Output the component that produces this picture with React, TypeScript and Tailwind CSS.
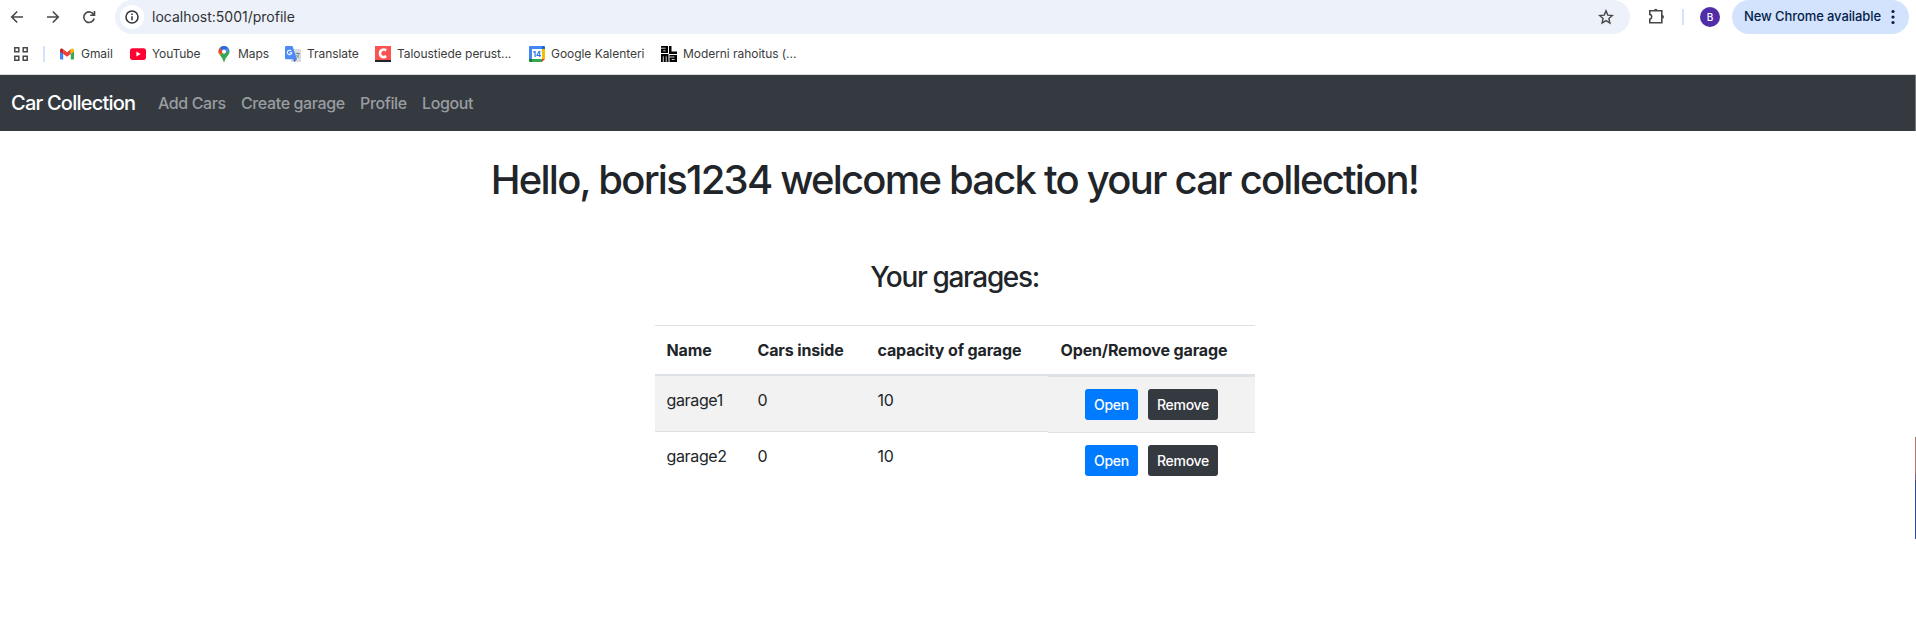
import React from "react";

const INTER = "font-['Inter',sans-serif]";

function Bookmark({ icon, label, className, tracking }: { icon: React.ReactNode; label: string; className: string; tracking: string }) {
  return (
    <div className={"flex h-4 shrink-0 items-center " + className}>
      <span className="w-[16px] shrink-0">{icon}</span>
      <span className={"ml-[6px] whitespace-nowrap text-[12px] leading-4 text-[#3c3c3c] " + tracking}>{label}</span>
    </div>
  );
}

const Gmail = () => (
  <svg width="16" height="16" viewBox="0 0 16 16">
    <path d="M1 4v8.4c0 .6.4 1 1 1h2.200V7.200z" fill="#4285f4" />
    <path d="M15 4v8.4c0 .6-.4 1-1 1h-2.200V7.200z" fill="#34a853" />
    <path d="M4.200 3.300v4.600L8 10.700l3.800-2.800V3.300L8 6.200z" fill="#ea4335" />
    <path d="M1 4.200v1.400l3.200 2.400V3.300l-.8-.6C2.400 2 1 2.700 1 4.200z" fill="#c5221f" />
    <path d="M15 4.200v1.400L11.800 8V3.300l.8-.6C13.600 2 15 2.700 15 4.200z" fill="#fbbc04" />
  </svg>
);
const YouTube = () => (
  <svg width="16" height="16" viewBox="0 0 16 16">
    <rect x="0" y="2.300" width="16" height="11.600" rx="2.600" fill="#ff0033" />
    <path d="M6.400 5.600v5l4.200-2.500z" fill="#fff" />
  </svg>
);
const Maps = () => (
  <svg width="16" height="16" viewBox="0 0 16 16">
    <defs>
      <clipPath id="pin"><path d="M8 0a5.500 5.500 0 0 0-5.500 5.600c0 2.300 1.100 3.500 2.700 5.400C6.500 12.600 7 13.600 7.300 15c.2 1.200 1.200 1.200 1.400 0 .3-1.400.8-2.400 2.100-4 1.600-1.900 2.700-3.100 2.700-5.400A5.500 5.500 0 0 0 8 0z" /></clipPath>
    </defs>
    <g clipPath="url(#pin)">
      <rect width="16" height="16" fill="#34a853" />
      <path d="M0 13.500 8 5.600V0H0z" fill="#fbbc04" />
      <path d="M0 0v5l5 3.500L9 4 13 0z" fill="#ea4335" />
      <path d="M3.500 1.500 8 5.500 14 -1H5z" fill="#1a73e8" />
      <path d="M8 5.600 13 0l1 4-5.500 4z" fill="#4285f4" />
      <circle cx="8" cy="5.600" r="2.100" fill="#fff" />
    </g>
  </svg>
);
const Translate = () => (
  <svg width="16" height="16" viewBox="0 0 16 16">
    <rect x="6" y="3" width="10" height="13" rx="1" fill="#dadce0" />
    <path d="M8.200 13.300H12L9.200 16z" fill="#3a5bc7" />
    <path d="M1 0h6.500L12 13.300H1a1 1 0 0 1-1-1V1a1 1 0 0 1 1-1z" fill="#4c8bf5" />
    <path d="M6.200 5A2.200 2.200 0 1 0 6.700 6.800H4.600" fill="none" stroke="#fff" strokeWidth="1.100" />
    <path d="M10.500 7.500h4.500M12.600 6.500v1M14 7.500c-.4 2-1.400 3-2.600 4M11.500 9c.6 1.200 1.500 2 2.700 2.700" fill="none" stroke="#607d8b" strokeWidth=".8" />
  </svg>
);
const CIcon = () => (
  <svg width="16" height="16" viewBox="0 0 16 16">
    <rect width="16" height="16" fill="#fa5151" />
    <rect y="14" width="16" height="2" fill="#26222b" />
    <path d="M11.200 4.300C8.500 2.600 5 4 5 7.400s3.200 4.800 6.200 2.700" fill="none" stroke="#fff" strokeWidth="2.600" />
  </svg>
);
const Calendar = () => (
  <svg width="16" height="16" viewBox="0 0 16 16">
    <path d="M1 0h12v3H3v10H0V1a1 1 0 0 1 1-1z" fill="#4285f4" />
    <path d="M13 0h2a1 1 0 0 1 1 1v2h-3z" fill="#1967d2" />
    <path d="M13 3h3v10h-3z" fill="#fbbc04" />
    <path d="M3 13h10v3H3z" fill="#34a853" />
    <path d="M0 13h3v3H1a1 1 0 0 1-1-1z" fill="#188038" />
    <path d="M13 13h3l-3 3z" fill="#ea4335" />
    <path d="M3 3h10v10H3z" fill="#fff" />
    <text x="8" y="10.700" textAnchor="middle" fontSize="7.500" fontWeight="700" fontFamily="Inter" fill="#1a73e8">14</text>
  </svg>
);
const Alma = () => (
  <svg width="16" height="16" viewBox="0 0 16 16">
    <path d="M0 0h7v7H0zM8 0h2.500v5.500H16V8H8zM0 8h7.500v8H0zM8.500 9H16v7H8.500z" fill="#000" />
    <path d="M0 2.200h4.600M2.200 4.800h2.400M2.300 10.300V16M5.200 10.300V16M8.500 11h5M10.700 13.500h2.900" stroke="#fff" strokeWidth=".8" />
  </svg>
);

const rows = ["garage1", "garage2"];

export default function App() {
  return (
    <div className={"relative h-[619px] w-full overflow-hidden bg-white text-[#212529] antialiased " + INTER}>
      <div className="flex h-[34px] items-center">
        <svg className="ml-[9px] shrink-0" width="88" height="34" viewBox="0 0 88 34" fill="none" stroke="#474747" strokeWidth="1.600">
          <path d="M14 17H3M8.200 11.500 2.700 17l5.500 5.500" />
          <path d="M38 17h11M43.800 11.500l5.500 5.500-5.500 5.500" />
          <path d="M84.800 14.800A5.300 5.300 0 1 0 85.200 18.500M85.500 11v4.200h-4.300" />
        </svg>
        <div className="ml-[18px] flex h-[34px] w-[1515px] shrink-0 items-center rounded-full bg-[#edf1fa] pl-[5px]">
          <div className="flex size-6 items-center justify-center rounded-full bg-white">
            <svg width="14" height="14" viewBox="0 0 14 14" fill="none" stroke="#303134" strokeWidth="1.500">
              <circle cx="7" cy="7" r="6" />
              <path d="M7 6.300v4M7 3.600v1.500" />
            </svg>
          </div>
          <span className="ml-[8px] text-[14px] leading-5 text-[#303134]">localhost:5001/profile</span>
          <svg className="ml-auto mr-[16px]" width="16" height="16" viewBox="0 0 16 16" fill="none" stroke="#474747" strokeWidth="1.400">
            <path d="m8 1.800 1.800 4.300 4.600.4-3.500 3 1 4.500L8 11.600 4.100 14l1-4.500-3.500-3 4.600-.4z" />
          </svg>
        </div>
        <svg className="ml-[18px] shrink-0" width="18" height="18" viewBox="0 0 18 18">
          <path d="M1.800 2.800h12v12h-12v-3.600c2.600-.6 2.600-4.200 0-4.800z" fill="none" stroke="#474747" strokeWidth="1.600" />
          <path d="M6 2.500a1.800 1.800 0 0 1 3.600 0zM14.200 7.100a1.800 1.800 0 0 1 0 3.600z" fill="#474747" />
        </svg>
        <div className="ml-[16px] h-4 w-[2px] bg-[#d3e3fd]" />
        <div className="ml-[16px] flex size-5 items-center justify-center rounded-full bg-[#512da8] text-[10px] font-medium text-white">B</div>
        <div className="ml-[12px] flex h-[34px] w-[177px] shrink-0 items-center rounded-full bg-[#d3e3fd] pl-[12px]">
          <span className="whitespace-nowrap text-[13px] font-medium tracking-[-0.1px] text-[#041e49]">New Chrome available</span>
          <svg className="ml-auto mr-[14px] shrink-0" width="4" height="16" viewBox="0 0 4 16" fill="#041e49">
            <circle cx="2" cy="2.500" r="1.600" /><circle cx="2" cy="8" r="1.600" /><circle cx="2" cy="13.500" r="1.600" />
          </svg>
        </div>
      </div>
      <div className="flex h-[41px] items-start border-b border-[#d9dadb] pt-[12px]">
        <svg className="ml-[14px] mt-px shrink-0" width="14" height="14" viewBox="0 0 14 14" fill="none" stroke="#474747" strokeWidth="1.500">
          <path d="M.8.800h4v4h-4zM9.200.800h4v4h-4zM.8 9.200h4v4h-4zM9.200 9.200h4v4h-4z" />
        </svg>
        <div className="ml-[15px] h-4 w-[2px] shrink-0 bg-[#d3e3fd]" />
        <Bookmark className="ml-[14px] w-[71px]" icon={<Gmail />} label="Gmail" tracking="tracking-[-0.05px]" />
        <Bookmark className="w-[86px]" icon={<YouTube />} label="YouTube" tracking="tracking-[-0.1px]" />
        <Bookmark className="w-[69px]" icon={<Maps />} label="Maps" tracking="tracking-[-0.1px]" />
        <Bookmark className="w-[90px]" icon={<Translate />} label="Translate" tracking="tracking-[-0.05px]" />
        <Bookmark className="w-[154px]" icon={<CIcon />} label="Taloustiede perust..." tracking="tracking-[-0.05px]" />
        <Bookmark className="w-[132px]" icon={<Calendar />} label="Google Kalenteri" tracking="tracking-[-0.05px]" />
        <Bookmark className="w-[160px]" icon={<Alma />} label="Moderni rahoitus (..." tracking="tracking-[-0.05px]" />
      </div>
      <nav className="flex h-14 items-center bg-[#343a40] text-[16px] font-[450] tracking-[-0.38px] text-[#9a9da0]">
        <span className="ml-[11px] w-[147px] whitespace-nowrap text-[20px] tracking-[-0.78px] text-white">Car Collection</span>
        <span className="w-[83px] whitespace-nowrap">Add Cars</span>
        <span className="w-[119px] whitespace-nowrap">Create garage</span>
        <span className="w-[62px] whitespace-nowrap">Profile</span>
        <span className="whitespace-nowrap">Logout</span>
      </nav>
      <main className="flex w-[1909px] flex-col items-center">
        <h1 className="mt-[25px] whitespace-nowrap text-[40px] font-medium leading-[48px] tracking-[-1.78px]">Hello, boris1234 welcome back to your car collection!</h1>
        <h2 className="mt-[56px] whitespace-nowrap text-[28px] font-medium leading-[34px] tracking-[-1.36px]">Your garages:</h2>
        <div className="mt-[31px] w-[600px] text-[16px] leading-6">
          <div className="flex h-[49px] items-start border-t border-[#dee2e6] pl-[12px] pt-[12px] font-bold tracking-[-0.14px]">
            <span className="w-[91px] whitespace-nowrap">Name</span>
            <span className="w-[120px] whitespace-nowrap">Cars inside</span>
            <span className="w-[183px] whitespace-nowrap">capacity of garage</span>
            <span className="whitespace-nowrap">Open/Remove garage</span>
          </div>
          {rows.map((name, i) => (
            <div key={name} className="flex h-[57px] items-start">
              <div className={"flex w-[393px] border-[#dee2e6] pl-[12px] pt-[12px] tracking-[-0.35px] " + (i === 0 ? "h-[57px] border-t-2 bg-[#f2f2f2]" : "h-14 border-t")}>
                <span className="w-[91px]">{name}</span>
                <span className="w-[120px]">0</span>
                <span>10</span>
              </div>
              <div className={"flex flex-1 gap-[10px] border-[#dee2e6] pl-[37px] pt-[12px] text-[14px] font-medium leading-[21px] tracking-[-0.3px] text-white " + (i === 0 ? "h-[58px] border-t-[3px] bg-[#f2f2f2]" : "mt-px border-t")}>
                <button className="h-[31px] w-[53px] rounded-[3px] bg-[#007bff] pl-px">Open</button>
                <button className="h-[31px] w-[70px] rounded-[3px] bg-[#343a40] pl-px">Remove</button>
              </div>
            </div>
          ))}
        </div>
      </main>
      <div className="absolute right-0 top-[75px] flex h-[544px] w-px flex-col">
        <div className="h-[56px] bg-[#75787b]" />
        <div className="h-[306px]" />
        <div className="h-[37px] bg-[#b8705f]" />
        <div className="h-[6px] bg-[#8a5f8f]" />
        <div className="h-[3px] bg-[#4a4468]" />
        <div className="h-[56px] bg-[#1d4fae]" />
      </div>
    </div>
  );
}
